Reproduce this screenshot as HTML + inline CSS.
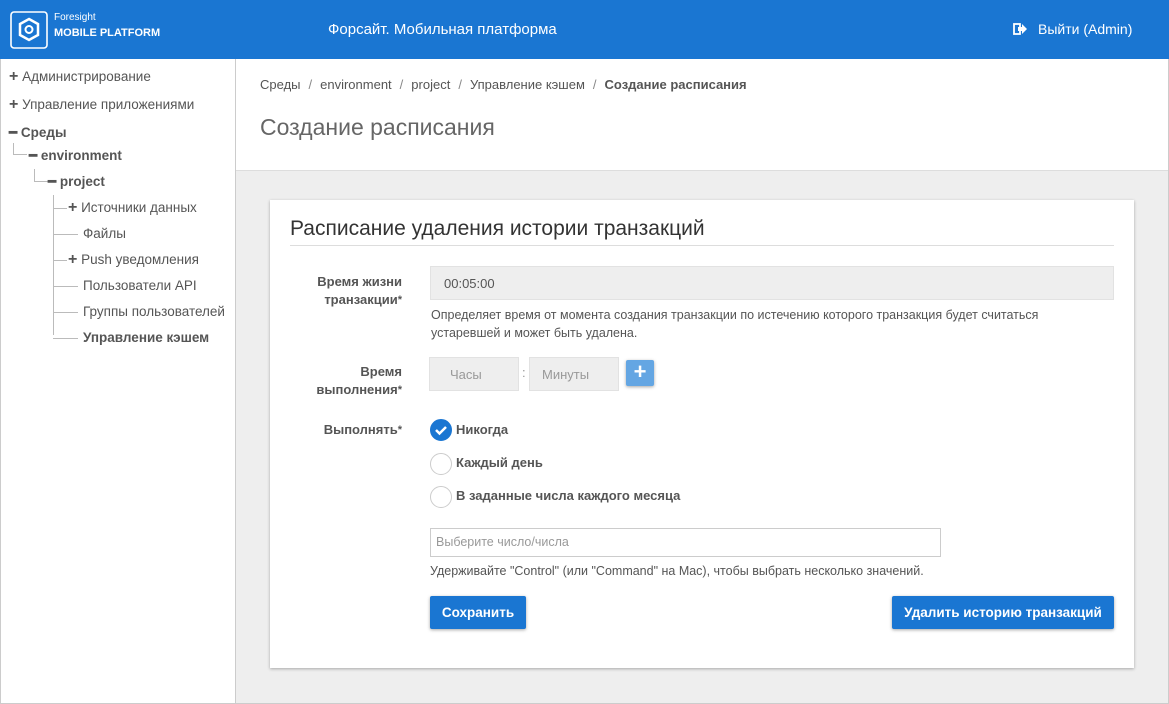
<!DOCTYPE html>
<html><head><meta charset="utf-8"><style>
*{box-sizing:border-box;margin:0;padding:0}
body{width:1169px;height:704px;overflow:hidden;font-family:"Liberation Sans",Roboto,sans-serif;color:#555;font-size:13px;background:#fff;position:relative}
.hdr{position:absolute;left:0;top:0;width:1169px;height:59px;background:#1a76d2;color:#fff}
.side{position:absolute;left:0;top:59px;width:236px;height:645px;border-right:1px solid #ccc;border-left:1px solid #ccc;border-bottom:1px solid #ccc;background:#fff;font-size:13.5px}
.main{position:absolute;left:236px;top:59px;width:933px;height:645px;background:#eee;border-right:1px solid #ccc;border-bottom:1px solid #ccc}
.top{background:#fff;height:112px;border-bottom:1px solid #ddd}
.t{position:absolute;white-space:nowrap}
.b{font-weight:bold}
.ln{position:absolute;background:#bbb}
.card{position:absolute;left:34px;top:141px;width:864px;height:468px;background:#fff;box-shadow:0 1px 3px rgba(0,0,0,.3)}
.inp{position:absolute;background:#eee;border:1px solid #e2e2e2;color:#999}
.btn{position:absolute;background:#1a76d2;color:#fff;font-weight:bold;font-size:13.5px;border-radius:2px;box-shadow:0 1px 3px rgba(0,0,0,.35);text-align:center}
.rad{position:absolute;width:22px;height:22px;border-radius:50%;border:1px solid #ccc;background:#fff}
.lbl{position:absolute;text-align:right;font-weight:bold;width:110px;line-height:18px}
.star{font-size:11px;vertical-align:top}
.pl{font-weight:bold;font-size:16px;line-height:13px}
.sl{margin:0 8px;color:#888}
</style></head><body>
<div class="hdr">
<svg class="t" style="left:10px;top:11px" width="38" height="38" viewBox="0 0 38 38"><rect x="1" y="1" width="36" height="36" rx="3" fill="none" stroke="#fff" stroke-width="1.6"/><polygon points="19,8 28,13 28,24 19,29 10,24 10,13" fill="none" stroke="#fff" stroke-width="2.5"/><circle cx="19" cy="18.5" r="3.5" fill="none" stroke="#fff" stroke-width="2"/></svg>
<div class="t" style="left:54px;top:12px;font-size:10px">Foresight</div>
<div class="t b" style="left:54px;top:27px;font-size:11px">MOBILE PLATFORM</div>
<div class="t" style="left:328px;top:21px;font-size:15px">Форсайт. Мобильная платформа</div>
<svg class="t" style="left:1013px;top:23px" width="14" height="12" viewBox="0 0 14 12"><rect x="1" y="1" width="6" height="10" fill="none" stroke="#fff" stroke-width="1.8"/><path d="M5 4h4V1l5 5-5 5V8H5z" fill="#fff"/></svg>
<div class="t" style="left:1038px;top:21px;font-size:14px">Выйти (Admin)</div>
</div>
<div class="side">
<div class="t" style="left:8px;top:10px"><span class="pl">+</span> Администрирование</div>
<div class="t" style="left:8px;top:38px"><span class="pl">+</span> Управление приложениями</div>
<div class="t b" style="left:8px;top:66px">━ Среды</div>
<div class="ln" style="left:12px;top:84px;width:1px;height:11px"></div><div class="ln" style="left:12px;top:95px;width:14px;height:1px"></div>
<div class="t b" style="left:28px;top:89px">━ environment</div>
<div class="ln" style="left:33px;top:110px;width:1px;height:12px"></div><div class="ln" style="left:33px;top:122px;width:14px;height:1px"></div>
<div class="t b" style="left:47px;top:115px">━ project</div>
<div class="ln" style="left:52px;top:136px;width:1px;height:140px"></div>
<div class="ln" style="left:52px;top:149px;width:14px;height:1px"></div>
<div class="ln" style="left:52px;top:175px;width:25px;height:1px"></div>
<div class="ln" style="left:52px;top:201px;width:14px;height:1px"></div>
<div class="ln" style="left:52px;top:227px;width:25px;height:1px"></div>
<div class="ln" style="left:52px;top:253px;width:25px;height:1px"></div>
<div class="ln" style="left:52px;top:279px;width:25px;height:1px"></div>
<div class="t" style="left:67px;top:141px"><span class="pl">+</span> Источники данных</div>
<div class="t" style="left:82px;top:167px">Файлы</div>
<div class="t" style="left:67px;top:193px"><span class="pl">+</span> Push уведомления</div>
<div class="t" style="left:82px;top:219px">Пользователи API</div>
<div class="t" style="left:82px;top:245px">Группы пользователей</div>
<div class="t b" style="left:82px;top:271px">Управление кэшем</div>
</div>
<div class="main">
<div class="top">
<div class="t" style="left:24px;top:18px">Среды<span class="sl">/</span>environment<span class="sl">/</span>project<span class="sl">/</span>Управление кэшем<span class="sl">/</span><b>Создание расписания</b></div>
<div class="t" style="left:24px;top:55px;font-size:23px;color:#666">Создание расписания</div>
</div>
<div class="card">
<div class="t" style="left:20px;top:17px;font-size:21px;color:#333">Расписание удаления истории транзакций</div>
<div class="ln" style="left:20px;top:45px;width:824px;height:1px;background:#ddd"></div>
<div class="lbl" style="left:22px;top:73px">Время жизни<br>транзакции<span class="star">*</span></div>
<div class="inp" style="left:160px;top:66px;width:684px;height:34px;color:#555;padding:9px 13px">00:05:00</div>
<div class="t" style="left:161px;top:106px;line-height:18px;font-size:12.5px">Определяет время от момента создания транзакции по истечению которого транзакция будет считаться<br>устаревшей и может быть удалена.</div>
<div class="lbl" style="left:22px;top:163px">Время<br>выполнения<span class="star">*</span></div>
<div class="inp" style="left:159px;top:157px;width:90px;height:34px;padding:9px 20px">Часы</div>
<div class="t" style="left:252px;top:165px;color:#999">:</div>
<div class="inp" style="left:259px;top:157px;width:90px;height:34px;padding:9px 12px">Минуты</div>
<div class="btn" style="left:356px;top:160px;width:28px;height:26px;background:#64a6e3;font-size:22px;line-height:24px">+</div>
<div class="lbl" style="left:22px;top:221px">Выполнять<span class="star">*</span></div>
<div class="rad" style="left:160px;top:219px;background:#1a76d2;border-color:#1a76d2"><svg width="20" height="20" viewBox="0 0 20 20"><path d="M5 10l3.5 3.5L15 7" fill="none" stroke="#fff" stroke-width="2.5"/></svg></div>
<div class="t b" style="left:186px;top:222px">Никогда</div>
<div class="rad" style="left:160px;top:253px"></div>
<div class="t b" style="left:186px;top:255px">Каждый день</div>
<div class="rad" style="left:160px;top:286px"></div>
<div class="t b" style="left:186px;top:288px">В заданные числа каждого месяца</div>
<div class="inp" style="left:160px;top:328px;width:511px;height:29px;background:#fff;border-color:#ccc;padding:6px 5px;font-size:12.5px">Выберите число/числа</div>
<div class="t" style="left:160px;top:364px;font-size:12.5px">Удерживайте "Control" (или "Command" на Mac), чтобы выбрать несколько значений.</div>
<div class="btn" style="left:160px;top:396px;width:96px;height:33px;line-height:33px">Сохранить</div>
<div class="btn" style="left:622px;top:396px;width:222px;height:33px;line-height:33px">Удалить историю транзакций</div>
</div>
</div>
</body></html>
